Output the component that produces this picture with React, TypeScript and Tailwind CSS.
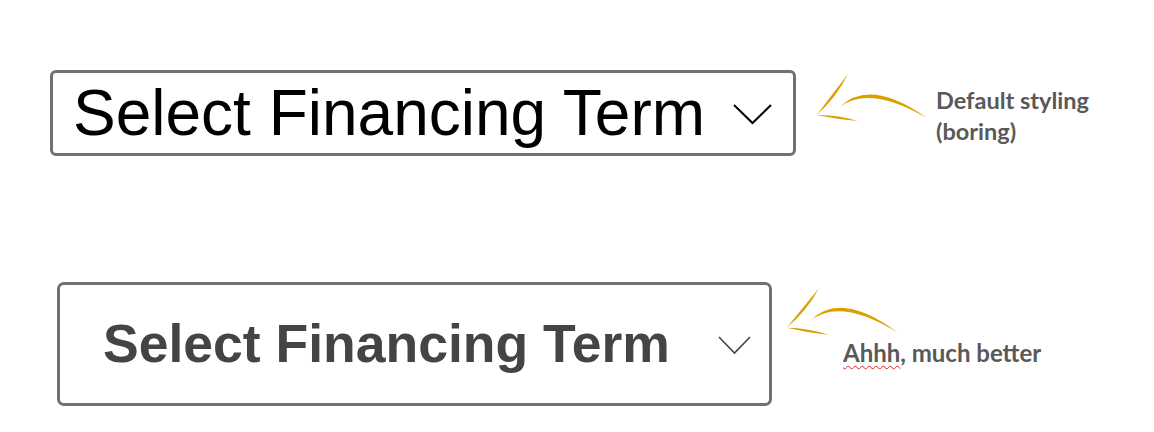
import React from 'react';

type Pt = [number, number];

// brush-like stroke: thin at both ends, thick in the middle
const taper = (p0: Pt, c: Pt, p1: Pt, w: number) => {
  const dx = p1[0] - p0[0];
  const dy = p1[1] - p0[1];
  const len = Math.hypot(dx, dy);
  const nx = (-dy / len) * w;
  const ny = (dx / len) * w;
  return `M${p0[0]} ${p0[1]} Q${c[0] + nx} ${c[1] + ny} ${p1[0]} ${p1[1]} Q${c[0] - nx} ${c[1] - ny} ${p0[0]} ${p0[1]}Z`;
};

const GOLD = '#d9a000';

const Arrow: React.FC<{ tip: Pt; up: Pt; low: Pt; c0: Pt; peak: Pt; c1: Pt; width: number; height: number; className?: string }> = ({
  tip, up, low, c0, peak, c1, width, height, className,
}) => {
  const ctrl: Pt = [2 * peak[0] - 0.5 * (c0[0] + c1[0]), 2 * peak[1] - 0.5 * (c0[1] + c1[1])];
  const upMid: Pt = [(tip[0] + up[0]) / 2 + 2, (tip[1] + up[1]) / 2 + 1.5];
  const lowMid: Pt = [(tip[0] + low[0]) / 2, (tip[1] + low[1]) / 2 - 1];
  return (
    <svg width={width} height={height} viewBox={`0 0 ${width} ${height}`} className={className}>
      <path d={taper(tip, upMid, up, 2.6)} fill={GOLD} />
      <path d={taper(tip, lowMid, low, 2.4)} fill={GOLD} />
      <path d={taper(c0, ctrl, c1, 3.6)} fill={GOLD} />
    </svg>
  );
};

const Chevron: React.FC<{ w: number; h: number; color: string; sw: number }> = ({ w, h, color, sw }) => (
  <svg width={w} height={h + 2} viewBox={`0 0 ${w} ${h + 2}`} className="shrink-0">
    <polyline points={`1,1 ${w / 2},${h} ${w - 1},1`} fill="none" stroke={color} strokeWidth={sw} strokeLinejoin="miter" />
  </svg>
);

export default function App() {
  return (
    <div className="w-[1154px] h-[432px] bg-white overflow-hidden flex flex-col">
      {/* default styling row */}
      <div className="flex items-start pt-[70px] pl-[50px]">
        <div className="w-[746px] h-[86px] border-[3px] border-[#717171] rounded-[6px] flex items-center shrink-0">
          <span className="pl-[20px] text-[64px] leading-none text-black font-['Liberation_Sans',Arial,sans-serif]">
            Select Financing Term
          </span>
          <div className="ml-auto mr-[21px] mt-[2px]">
            <Chevron w={39} h={19} color="#000" sw={2} />
          </div>
        </div>
        <Arrow
          className="ml-[10px] -mt-[10px] shrink-0"
          width={130}
          height={80}
          tip={[10.7, 55]}
          up={[42, 14]}
          low={[52, 61]}
          c0={[34, 46.7]}
          peak={[70.7, 36.7]}
          c1={[121, 58]}
        />
        <div className="mt-[15px] text-[23.5px] leading-[31px] font-bold text-[#595959] whitespace-nowrap font-['Lato','Open_Sans',sans-serif]">
          <div>Default styling</div>
          <div>(boring)</div>
        </div>
      </div>

      {/* custom styling row */}
      <div className="flex items-start pt-[126px] pl-[57px]">
        <div className="w-[715px] h-[124px] border-[3px] border-[#717171] rounded-[7px] flex items-center shrink-0">
          <span className="pl-[43px] text-[53.5px] leading-none font-bold text-[#444444] font-['Liberation_Sans',Arial,sans-serif]">
            Select Financing Term
          </span>
          <div className="ml-auto mr-[18px] mt-[2px]">
            <Chevron w={33} h={17} color="#444444" sw={1.6} />
          </div>
        </div>
        <div className="flex flex-col ml-[4px] -mt-[2px]">
          <Arrow
            className="shrink-0"
            width={130}
            height={58}
            tip={[10.7, 47.7]}
            up={[43.3, 7.7]}
            low={[53.3, 55]}
            c0={[34, 41]}
            peak={[70.7, 30]}
            c1={[121.3, 52.3]}
          />
          <div className="ml-[67px] text-[24px] leading-[30px] font-bold text-[#595959] whitespace-nowrap font-['Lato','Open_Sans',sans-serif]">
            <span className="underline decoration-wavy decoration-[#e02020] decoration-1 underline-offset-[3px]">Ahhh</span>, much better
          </div>
        </div>
      </div>
    </div>
  );
}
